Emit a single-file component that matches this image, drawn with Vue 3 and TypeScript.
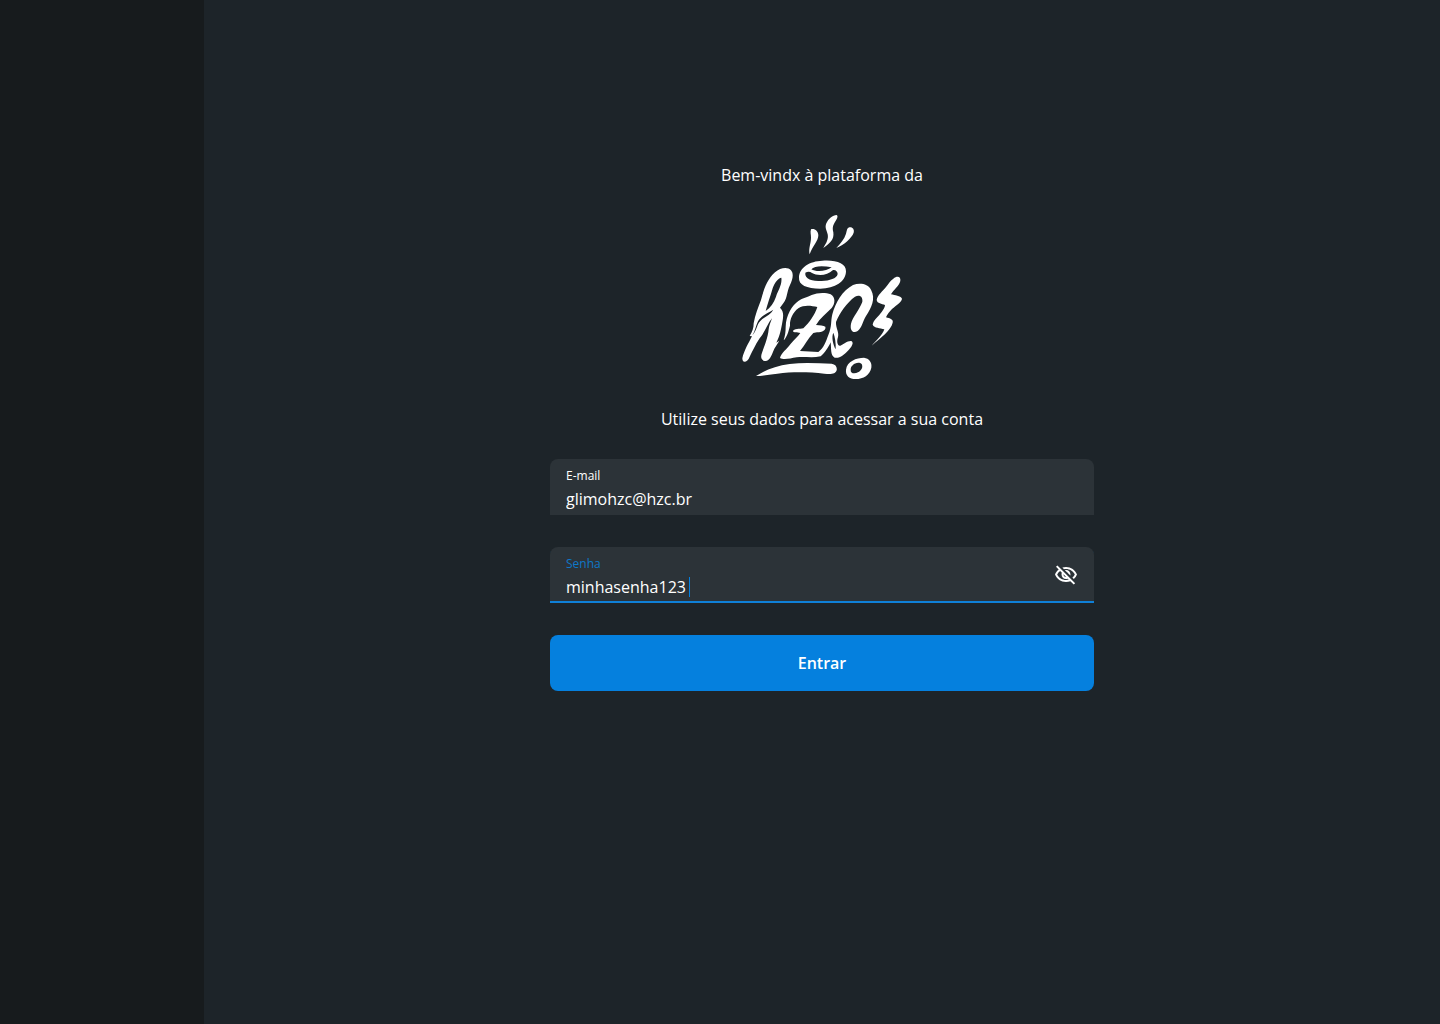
<script setup lang="ts">
import { ref } from 'vue'

const email = ref('glimohzc@hzc.br')
const password = ref('minhasenha123')
const passwordVisible = ref(true)
</script>

<template>
  <div class="page">
    <aside class="sidebar"></aside>
    <main class="content">
      <p class="message">Bem-vindx à plataforma da</p>
      <svg class="logo" viewBox="21 30 480 492" role="img" aria-label="hzc">
        <g fill="#fff" fill-rule="evenodd">
          <!-- steam -->
          <path d="M228 73C238 69 250 78 250 91C250 108 233 122 224 148C220 130 228 115 228 98C228 88 225 81 228 73Z" />
          <path d="M305 30C309 32 308 38 304 44C295 58 291 66 295 82C298 104 285 115 265 129C274 114 281 102 278 88C274 74 269 67 274 55C280 41 293 31 305 30Z" />
          <path d="M343 67C352 65 359 73 356 83C350 100 326 120 304 129C316 115 328 103 333 86C336 75 336 69 343 67Z" />
          <!-- cup -->
          <path d="M192 217C193 188 224 168 262 167C302 164 334 174 333 199C333 229 300 251 256 251C215 251 190 241 192 217ZM211 203C208 223 232 228 260 228C284 227 305 221 308 207C308 199 300 193 293 196C277 213 246 213 231 204C225 199 218 199 211 203ZM229 193C243 202 276 199 290 187C264 182 238 182 229 193Z" />
          <!-- h -->
          <path d="M22 460C27 437 42 412 51 394L44 393C52 380 56 370 56 355C60 330 70 306 78 285C88 247 98 222 120 202C136 188 158 185 168 196C177 207 173 222 165 240C155 260 157 280 146 293L135 308C146 318 146 331 142 352C138 374 135 392 124 413L133 407L118 431C111 447 106 465 93 468C78 468 76 456 81 443C89 422 99 396 101 373C102 362 108 350 111 340C98 355 91 380 74 400C60 421 52 440 44 455C38 472 22 477 22 460ZM139 218C130 219 119 232 113 250C106 274 98 296 92 318C107 308 116 294 123 275C129 256 142 240 139 218ZM52 391C68 374 63 357 82 342C97 332 108 326 115 314C100 323 85 328 73 343C61 360 63 375 52 391Z" />
          <!-- z and c -->
          <path d="M146 406C150 392 152 382 152 365C153 330 171 302 190 288C203 279 217 277 230 270C248 262 273 262 287 268C302 276 301 297 290 309C272 327 255 340 243 360C255 362 265 361 271 365C274 375 262 382 246 382L235 384C219 400 210 420 195 438C214 440 232 439 250 441C267 428 273 409 280 390C291 365 287 348 292 328C302 292 322 257 354 240C376 232 399 237 408 254C423 281 409 309 393 333C383 349 382 367 368 378C354 387 344 376 348 356C352 337 376 310 382 290C384 274 373 268 360 275C336 292 313 325 303 351C302 370 313 381 309 396C304 410 308 424 316 422C328 417 336 407 349 408C358 413 350 425 341 435C328 449 314 461 299 458C286 452 289 430 287 412C282 424 268 446 257 454C232 460 208 454 185 457C164 461 145 465 135 459C138 445 156 432 166 418C178 404 188 395 196 384C186 382 176 384 174 379C176 370 194 373 205 370C223 352 239 331 247 306C230 303 208 298 190 310C174 322 164 342 165 362C161 378 156 397 146 406ZM295 383C289 396 294 418 302 433C303 414 300 395 295 383Z" />
          <!-- bolt -->
          <path d="M475 221C486 212 498 214 496 228C493 242 475 255 468 268C480 271 496 272 501 281C500 292 484 300 471 312C464 320 456 328 453 337C465 340 476 344 473 353C469 375 436 399 410 422C425 405 442 391 448 373C435 368 418 370 413 359C415 345 431 334 440 321C446 312 450 306 450 300C440 296 427 296 425 285C427 270 444 258 453 246C461 236 465 227 475 221Z" />
          <!-- dot -->
          <path d="M333 494C336 469 364 458 387 458C402 460 412 472 409 488C405 510 385 522 362 522C343 522 331 512 333 494ZM347 494C346 506 359 507 369 502C379 497 385 487 380 477C373 470 359 474 354 480C349 483 347 489 347 494Z" />
          <!-- underline -->
          <path d="M63 513C93 494 124 482 164 477C205 472 248 475 290 476C302 478 307 486 305 496C301 509 285 508 268 506C223 501 172 500 127 506C102 509 81 513 63 513Z" />
        </g>
      </svg>
      <p class="message">Utilize seus dados para acessar a sua conta</p>
      <form class="form" @submit.prevent>
        <div class="field">
          <div class="field-body">
            <label for="email">E-mail</label>
            <input id="email" v-model="email" class="wide" type="email" autocomplete="off" spellcheck="false" />
          </div>
        </div>
        <div class="field active">
          <div class="field-body">
            <label for="password">Senha</label>
            <div class="entry">
              <input
                id="password"
                v-model="password"
                :type="passwordVisible ? 'text' : 'password'"
                autocomplete="off"
                spellcheck="false"
              />
              <span class="caret"></span>
            </div>
          </div>
          <button
            class="toggle"
            type="button"
            aria-label="Ocultar senha"
            @click="passwordVisible = !passwordVisible"
          >
            <svg width="24" height="24" viewBox="0 0 24 24" fill="currentColor" aria-hidden="true">
              <path d="M12 6c3.79 0 7.17 2.13 8.82 5.5-.59 1.22-1.42 2.27-2.41 3.12l1.41 1.41c1.39-1.23 2.49-2.77 3.18-4.53C21.27 7.11 17 4 12 4c-1.27 0-2.49.2-3.64.57l1.65 1.65C10.66 6.09 11.32 6 12 6zm-1.07 1.14L13 9.21c.57.25 1.03.71 1.28 1.28l2.07 2.07c.08-.34.14-.7.14-1.07C16.5 9.01 14.48 7 12 7c-.37 0-.72.05-1.07.14zM2.01 3.87l2.68 2.68C3.06 7.83 1.77 9.53 1 11.5 2.73 15.89 7 19 12 19c1.52 0 2.98-.29 4.32-.82l3.42 3.42 1.41-1.41L3.42 2.45 2.01 3.87zm7.5 7.5l2.61 2.61c-.04.01-.08.02-.12.02-1.38 0-2.5-1.12-2.5-2.5 0-.05.01-.08.01-.13zm-3.4-3.4l1.75 1.75c-.23.55-.36 1.15-.36 1.78 0 2.48 2.02 4.5 4.5 4.5.63 0 1.23-.13 1.77-.36l.98.98c-.88.24-1.8.38-2.75.38-3.79 0-7.17-2.13-8.82-5.5.7-1.43 1.72-2.61 2.93-3.53z" />
            </svg>
          </button>
        </div>
        <button class="submit" type="submit">Entrar</button>
      </form>
    </main>
  </div>
</template>

<style>
body {
  margin: 0;
  background: #1d2429;
}
</style>

<style scoped>
.page {
  display: flex;
  min-height: 100vh;
  color: #fff;
  font-family: "Open Sans", "Noto Sans", sans-serif;
  font-size: 16px;
  line-height: 24px;
}

.sidebar {
  flex: 0 0 204px;
  background: #171b1d;
}

.content {
  flex: 1;
  display: flex;
  flex-direction: column;
  align-items: center;
  gap: 28px;
  box-sizing: border-box;
  padding: 163px 24px 32px;
}

.message {
  margin: 0;
  text-align: center;
}

.logo {
  display: block;
  width: 160px;
  height: 164px;
}

.form {
  display: flex;
  flex-direction: column;
  gap: 32px;
  width: 100%;
  max-width: 544px;
}

.field {
  display: flex;
  align-items: center;
  gap: 16px;
  height: 56px;
  box-sizing: border-box;
  padding: 0 16px;
  border-radius: 8px 8px 0 0;
  background: #2c3338;
}

.field-body {
  flex: 1;
  display: flex;
  flex-direction: column;
  gap: 3px;
  padding-top: 5px;
}

label {
  font-size: 12px;
  line-height: 16px;
}

input {
  field-sizing: content;
  min-width: 0;
  height: 24px;
  padding: 0;
  border: 0;
  outline: 0;
  background: transparent;
  color: inherit;
  font: inherit;
}

.wide {
  width: 100%;
}

.active {
  box-shadow: inset 0 -2px #0f80d7;
}

.active label {
  color: #0f78c8;
}

.entry {
  display: flex;
  align-items: center;
  gap: 3px;
}

.caret {
  width: 1px;
  height: 20px;
  background: #0580de;
}

.toggle {
  display: flex;
  padding: 0;
  border: 0;
  background: none;
  color: #fff;
  cursor: pointer;
}

.submit {
  height: 56px;
  border: 0;
  border-radius: 8px;
  background: #0580de;
  color: #fff;
  font: inherit;
  font-weight: 600;
  cursor: pointer;
}
</style>
